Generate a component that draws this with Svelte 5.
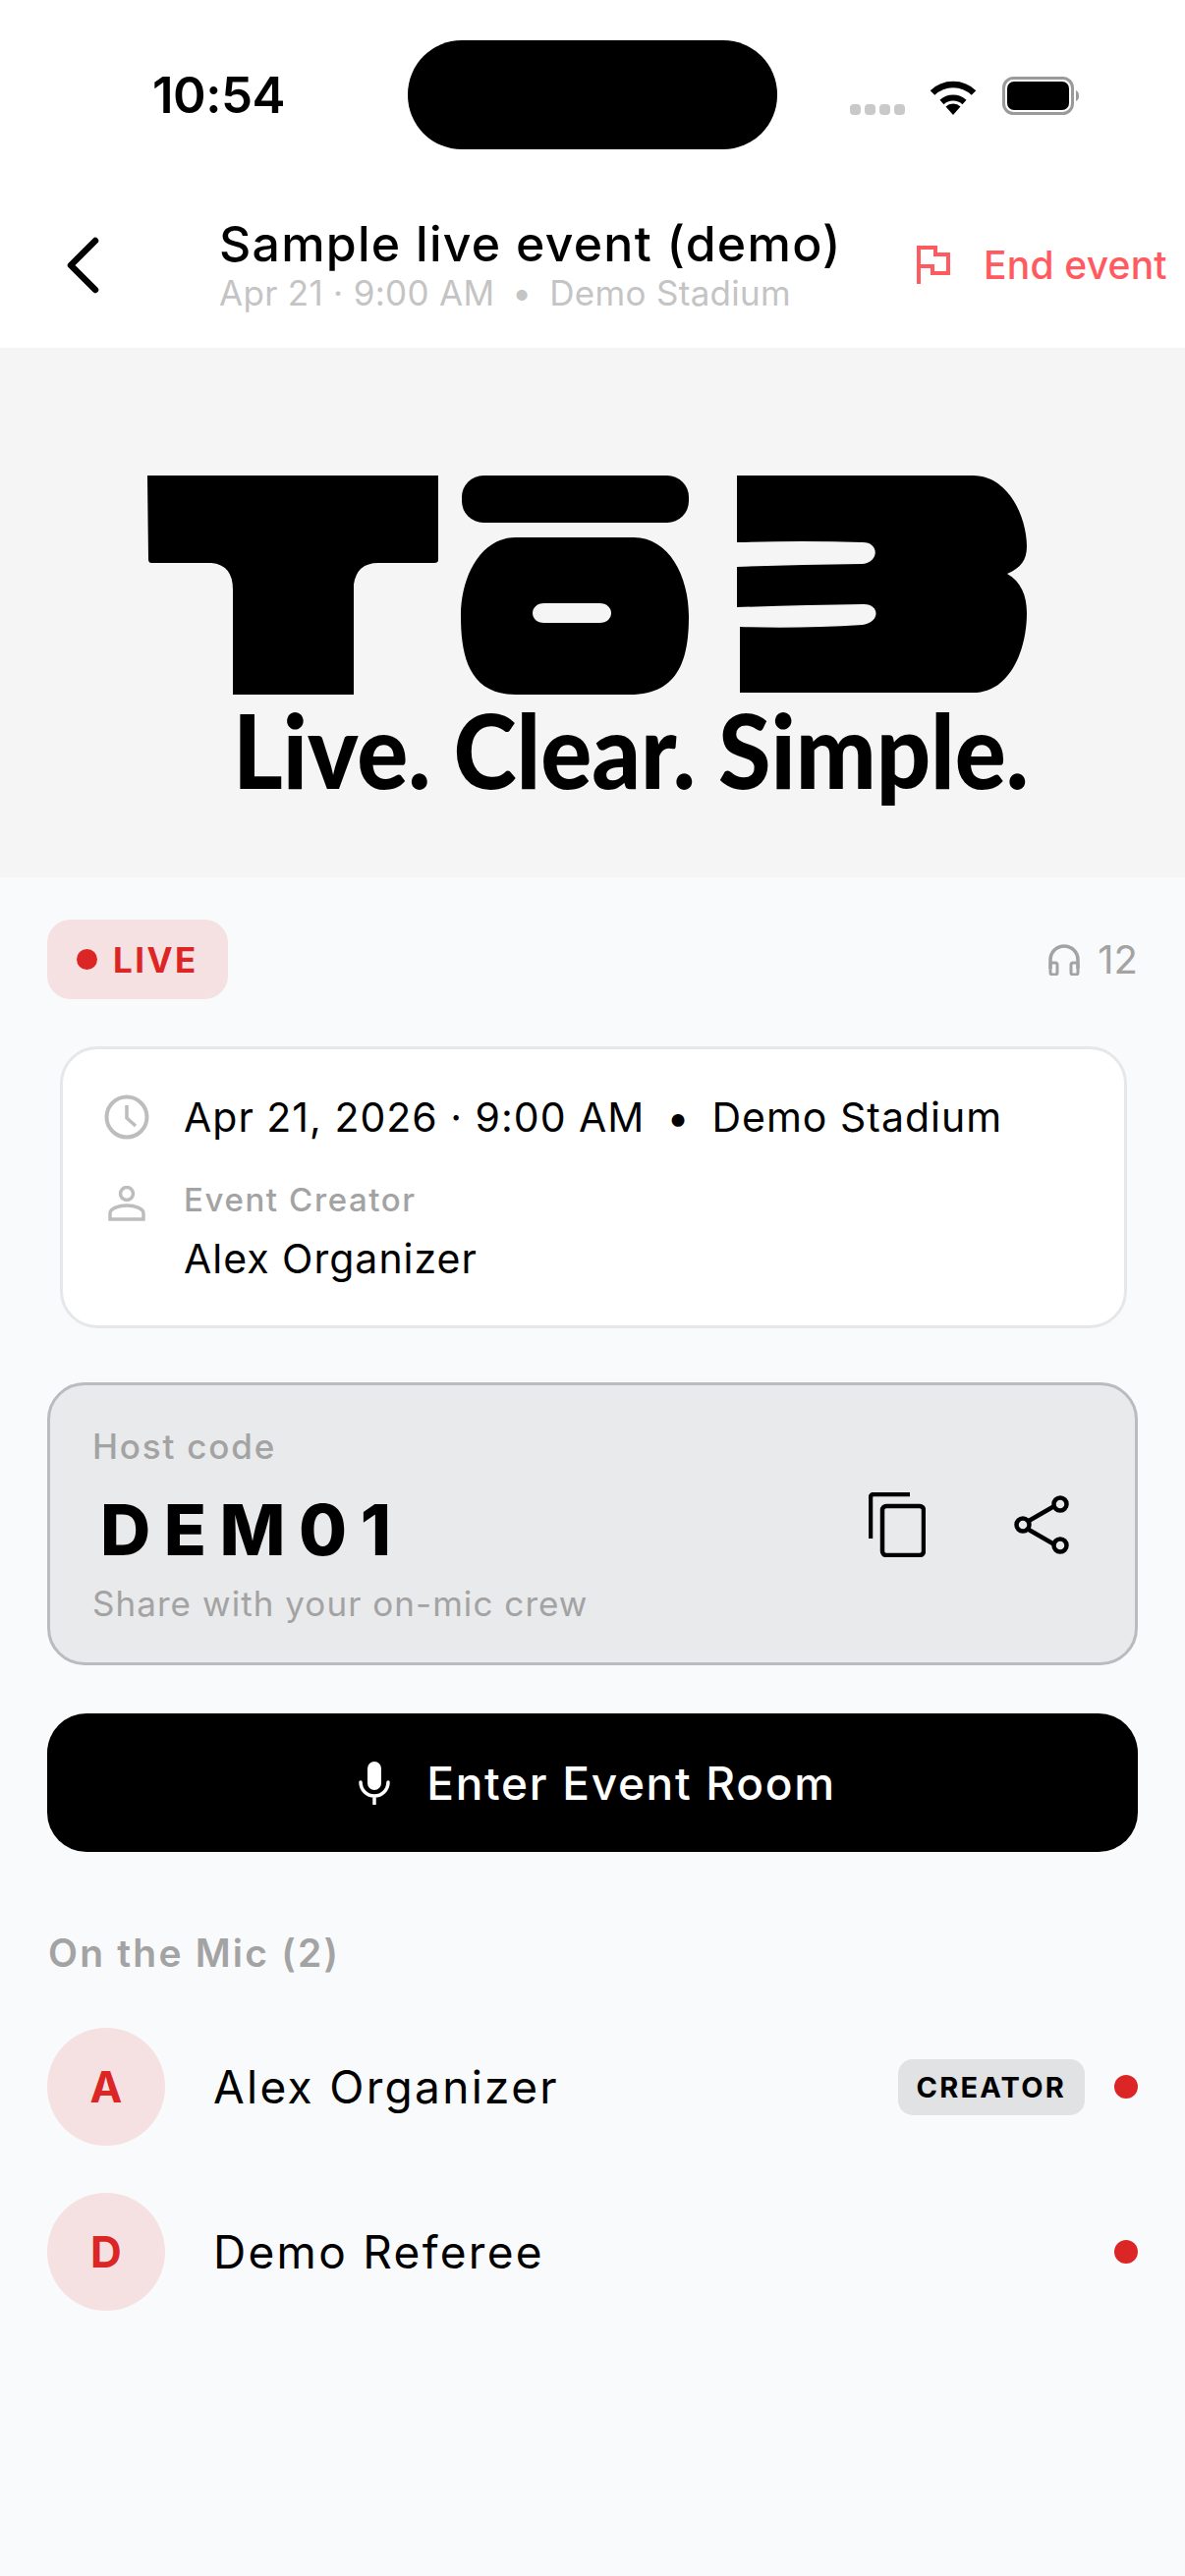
<script>
	const crew = [
		{ initial: 'A', name: 'Alex Organizer', badge: 'CREATOR' },
		{ initial: 'D', name: 'Demo Referee', badge: '' }
	];
</script>

<div class="screen">
	<header class="top">
		<div class="status">
			<span class="time">10:54</span>
			<div class="island"></div>
			<div class="status-icons">
				<div class="signal"><i></i><i></i><i></i><i></i></div>
				<svg class="wifi" viewBox="0 0 50 37" width="50" height="37">
					<path d="M25 37 17.500 28.500a11 11 0 0 1 15 0Z" fill="#000" />
					<path d="M13.500 24a17 17 0 0 1 23 0" fill="none" stroke="#000" stroke-width="6" />
					<path d="M4 14.500a30 30 0 0 1 42 0" fill="none" stroke="#000" stroke-width="6.500" />
				</svg>
				<svg class="battery" viewBox="0 0 78 39" width="78" height="39">
					<rect x="1.500" y="1.500" width="70" height="36" rx="10" fill="none" stroke="#9a9a9a" stroke-width="3" />
					<rect x="5" y="5" width="63" height="29" rx="7" fill="#000" />
					<path d="M75 14c2.500 1 3 3 3 5.500s-.5 4.500-3 5.500Z" fill="#9a9a9a" />
				</svg>
			</div>
		</div>
		<div class="nav">
			<svg class="back" viewBox="0 0 36 60" width="36" height="60">
				<path d="M31 5 6 30l25 25" fill="none" stroke="#000" stroke-width="6.500" stroke-linecap="round" stroke-linejoin="round" />
			</svg>
			<div class="nav-title">
				<div class="title">Sample live event (demo)</div>
				<div class="subtitle">Apr 21 · 9:00 AM<span class="sep">•</span>Demo Stadium</div>
			</div>
			<div class="end">
				<svg viewBox="0 0 36 40" width="36" height="40">
					<path d="M3 40V3h17v7h13v19H17v-7H3" fill="none" stroke="#ff5a5f" stroke-width="4" />
				</svg>
				<span>End event</span>
			</div>
		</div>
	</header>

	<div class="logo">
		<svg viewBox="0 0 1206 539" width="1206" height="539">
			<g transform="translate(0 -354)">
				<path d="M150 484H446V570q0 3-4 3H385q-22 0-25 22L360 707H237V600q0-25-22-27H154q-3 0-3-4Z" />
				<rect x="470" y="484" width="231" height="48" rx="22" />
				<path fill-rule="evenodd" d="M525 547H645c36 0 56 40 56 80s-8 80-60 80H525c-48 0-56-40-56-80s20-80 56-80ZM554 614c-16 0-16 20 0 20H610c16 0 16-20 0-20Z" />
				<path d="M750 484H990c38 0 55 45 55 72 0 14-6 22-20 28 14 8 20 22 20 40 0 36-16 81-55 81H753V638q60 2 125-2c18-2 18-22 0-21q-60 1-128 3V577q60-2 128-3c17-2 17-22 0-22q-60-2-128 0Z" />
			</g>
			<text class="tag" x="237" y="449" textLength="810" lengthAdjust="spacingAndGlyphs">Live. Clear. Simple.</text>
		</svg>
	</div>

	<main class="content">
		<div class="meta-row">
			<div class="live"><i></i>LIVE</div>
			<div class="listeners">
				<svg viewBox="0 0 34 32" width="34" height="32">
					<path d="M3 25V16a14 14 0 0 1 28 0v9" fill="none" stroke="#a3a3a3" stroke-width="3.500" />
					<rect x="3" y="19" width="7" height="12" rx="2" fill="none" stroke="#a3a3a3" stroke-width="3" />
					<rect x="24" y="19" width="7" height="12" rx="2" fill="none" stroke="#a3a3a3" stroke-width="3" />
				</svg>
				<span>12</span>
			</div>
		</div>

		<section class="info">
			<div class="info-row">
				<svg viewBox="0 0 46 46" width="46" height="46">
					<circle cx="23" cy="23" r="20.500" fill="none" stroke="#bdbdbd" stroke-width="4" />
					<path d="M23 11v13l9 8" fill="none" stroke="#bdbdbd" stroke-width="3.500" />
				</svg>
				<span class="info-text">Apr 21, 2026 · 9:00 AM<span class="sep">•</span>Demo Stadium</span>
			</div>
			<div class="info-row creator">
				<svg viewBox="0 0 38 36" width="38" height="36">
					<circle cx="19" cy="8" r="6.500" fill="none" stroke="#bdbdbd" stroke-width="3.500" />
					<path d="M2 34v-6c0-5 9-8 17-8s17 3 17 8v6Z" fill="none" stroke="#bdbdbd" stroke-width="3.500" />
				</svg>
				<div>
					<div class="creator-label">Event Creator</div>
					<div class="info-text">Alex Organizer</div>
				</div>
			</div>
		</section>

		<section class="host">
			<div class="host-text">
				<div class="host-label">Host code</div>
				<div class="code">DEM01</div>
				<div class="host-label hint">Share with your on-mic crew</div>
			</div>
			<div class="host-actions">
				<svg viewBox="0 0 58 66" width="58" height="66">
					<path d="M2 47V5a3 3 0 0 1 3-3h37" fill="none" stroke="#000" stroke-width="4.500" />
					<rect x="14" y="14" width="42" height="50" rx="4" fill="none" stroke="#000" stroke-width="4.500" />
				</svg>
				<svg class="share" viewBox="0 0 56 60" width="56" height="60">
					<path d="M15 26 41 11M15 35l26 15" fill="none" stroke="#000" stroke-width="4.500" />
					<circle cx="47" cy="9" r="6.500" fill="none" stroke="#000" stroke-width="4.500" />
					<circle cx="9" cy="30" r="6.500" fill="none" stroke="#000" stroke-width="4.500" />
					<circle cx="47" cy="51" r="6.500" fill="none" stroke="#000" stroke-width="4.500" />
				</svg>
			</div>
		</section>

		<button class="enter">
			<svg viewBox="0 0 32 44" width="32" height="44">
				<rect x="9" y="0" width="14" height="29" rx="7" fill="#fff" />
				<path d="M2 21a14 14 0 0 0 28 0M16 35v9" fill="none" stroke="#fff" stroke-width="3.500" stroke-linecap="round" />
			</svg>
			Enter Event Room
		</button>

		<h2>On the Mic ({crew.length})</h2>

		<ul class="crew">
			{#each crew as person}
				<li>
					<div class="avatar">{person.initial}</div>
					<span class="name">{person.name}</span>
					{#if person.badge}<span class="badge">{person.badge}</span>{/if}
					<i class="mic-dot"></i>
				</li>
			{/each}
		</ul>
	</main>
</div>

<style>
	:global(body) {
		margin: 0;
		background: #f9fafc;
	}

	.screen {
		width: 1206px;
		height: 2622px;
		overflow: hidden;
		font-family: Inter, 'Liberation Sans', sans-serif;
		color: #000;
		background: #f9fafc;
	}

	.top {
		height: 354px;
		background: #fff;
	}

	.status {
		height: 193px;
		display: flex;
		align-items: flex-start;
		box-sizing: border-box;
		padding: 41px 0 0 155px;
	}

	.time {
		width: 260px;
		margin-top: 27px;
		font-size: 51px;
		line-height: 58px;
		font-weight: 600;
		letter-spacing: -0.5px;
	}

	.island {
		width: 376px;
		height: 111px;
		border-radius: 55px;
		background: #000;
	}

	.status-icons {
		display: flex;
		align-items: flex-start;
		margin: 37px 0 0 74px;
	}

	.signal {
		display: flex;
		gap: 4px;
		margin-top: 28px;
		width: 58px;
	}

	.signal i {
		width: 11px;
		height: 11px;
		border-radius: 4px;
		background: #c9c9c9;
	}

	.wifi {
		margin: 2px 25px 0 22px;
	}

	.nav {
		height: 161px;
		display: flex;
		box-sizing: border-box;
		padding-left: 66px;
	}

	.back {
		margin-top: 47px;
	}

	.nav-title {
		width: 709px;
		margin-left: 121px;
		padding-top: 28px;
	}

	.title {
		font-size: 50px;
		line-height: 54px;
		font-weight: 500;
		letter-spacing: 1.25px;
		white-space: nowrap;
	}

	.subtitle {
		margin-top: 5px;
		font-size: 35px;
		line-height: 36px;
		letter-spacing: 0.3px;
		color: #c4c4c4;
		white-space: nowrap;
	}

	.subtitle .sep {
		margin: 0 18px;
	}

	.end {
		display: flex;
		align-items: center;
		gap: 33px;
		height: 40px;
		margin-top: 56px;
		font-size: 39px;
		font-weight: 500;
		letter-spacing: 0.2px;
		color: #ff5a5f;
		white-space: nowrap;
	}

	.logo {
		height: 539px;
		background: #f5f5f5;
	}

	.logo svg {
		display: block;
	}

	.tag {
		font-family: Lato, sans-serif;
		font-size: 105px;
		font-weight: 900;
		fill: #000;
	}

	.content {
		padding: 43px 48px 0;
	}

	.meta-row {
		display: flex;
		justify-content: space-between;
		align-items: center;
		height: 81px;
	}

	.live {
		display: flex;
		align-items: center;
		gap: 16px;
		height: 81px;
		box-sizing: border-box;
		padding: 0 30px;
		border-radius: 24px;
		background: #f5e1e1;
		color: #dc2626;
		font-size: 35px;
		font-weight: 700;
		letter-spacing: 2.4px;
	}

	.live i {
		width: 21px;
		height: 21px;
		border-radius: 50%;
		background: #dc2626;
	}

	.listeners {
		display: flex;
		align-items: center;
		gap: 17px;
		font-size: 40px;
		color: #a3a3a3;
	}

	.info {
		margin: 48px 11px 0 13px;
		height: 287px;
		box-sizing: border-box;
		padding: 42px 42px 0;
		background: #fff;
		border: 3px solid #e5e7eb;
		border-radius: 38px;
	}

	.info-row {
		display: flex;
		align-items: center;
		gap: 35px;
	}

	.info-text {
		font-size: 41px;
		line-height: 54px;
		letter-spacing: 1px;
		white-space: nowrap;
	}

	.info-text .sep {
		margin: 0 22px;
	}

	.creator {
		align-items: flex-start;
		margin-top: 37px;
	}

	.creator svg {
		margin: 6px 4px 0 4px;
	}

	.creator-label {
		font-size: 33px;
		line-height: 40px;
		font-weight: 500;
		color: #a3a3a3;
		letter-spacing: 1.6px;
		margin-bottom: 13px;
	}

	.host {
		margin-top: 55px;
		height: 288px;
		box-sizing: border-box;
		padding: 41px 67px 0 43px;
		display: flex;
		justify-content: space-between;
		background: #e9eaec;
		border: 3px solid #b9bbbe;
		border-radius: 38px;
	}

	.host-label {
		font-size: 35px;
		line-height: 42px;
		font-weight: 500;
		color: #a3a3a3;
		letter-spacing: 1.8px;
	}

	.hint {
		font-weight: 400;
		letter-spacing: 1.05px;
	}

	.code {
		font-size: 71px;
		line-height: 80px;
		font-weight: 800;
		letter-spacing: 13.5px;
		margin: 24px 0 14px 8px;
	}

	.host-actions {
		display: flex;
		align-items: flex-start;
		gap: 90px;
		padding-top: 68px;
	}

	.share {
		margin-top: 3px;
	}

	.enter {
		display: flex;
		align-items: center;
		justify-content: center;
		gap: 37px;
		width: 100%;
		height: 141px;
		margin-top: 49px;
		padding: 0 0 0 10px;
		border: 0;
		border-radius: 40px;
		background: #000;
		color: #fff;
		font-family: inherit;
		font-size: 46px;
		font-weight: 500;
		letter-spacing: 1.7px;
	}

	h2 {
		margin: 78px 0 0 1px;
		font-size: 39px;
		line-height: 50px;
		font-weight: 600;
		color: #a3a3a3;
		letter-spacing: 2.2px;
	}

	.crew {
		list-style: none;
		margin: 51px 0 0;
		padding: 0;
		display: flex;
		flex-direction: column;
		gap: 48px;
	}

	.crew li {
		display: flex;
		align-items: center;
		height: 120px;
	}

	.avatar {
		width: 120px;
		height: 120px;
		display: flex;
		align-items: center;
		justify-content: center;
		border-radius: 50%;
		background: #f5e1e1;
		color: #dc2626;
		font-size: 44px;
		font-weight: 700;
	}

	.name {
		flex: 1;
		margin-left: 49px;
		font-size: 46px;
		letter-spacing: 2.3px;
	}

	.badge {
		height: 57px;
		line-height: 57px;
		padding: 0 19px;
		margin-right: 30px;
		border-radius: 15px;
		background: #e1e2e4;
		font-size: 29px;
		font-weight: 700;
		letter-spacing: 2.2px;
	}

	.mic-dot {
		width: 24px;
		height: 24px;
		border-radius: 50%;
		background: #dc2626;
	}
</style>
